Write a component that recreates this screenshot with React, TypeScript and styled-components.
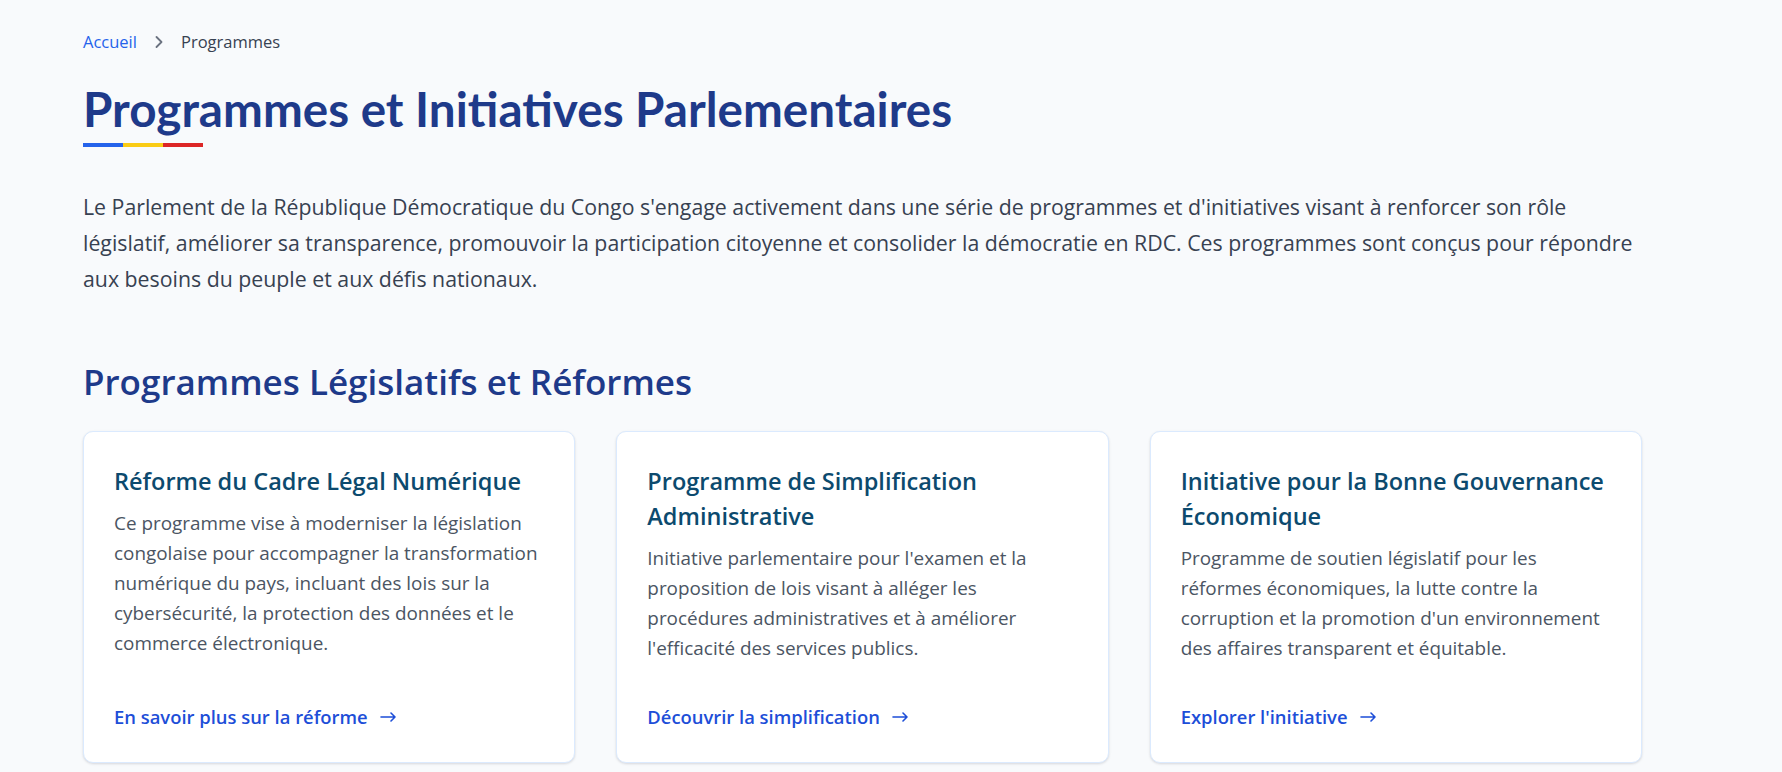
import React from "react";
import styled, { createGlobalStyle } from "styled-components";
import { ChevronRight } from "lucide-react";

const GlobalStyle = createGlobalStyle`
  html, body {
    margin: 0;
    padding: 0;
    background: #f8fafc;
  }
  body {
    font-family: "Open Sans", "Noto Sans", sans-serif;
    color: #374151;
    -webkit-font-smoothing: antialiased;
  }
  * { box-sizing: border-box; }
`;

const Page = styled.main`
  min-height: 772px;
  padding: 30px 0 40px 83px;
  width: 1642px;
`;

const Breadcrumb = styled.nav`
  display: flex;
  align-items: center;
  height: 24px;
  font-size: 16.5px;
  line-height: 24px;
`;

const CrumbLink = styled.a`
  color: #2563eb;
  text-decoration: none;
`;

const CrumbSep = styled.span`
  display: inline-flex;
  margin: 0 12px;
  color: #6b7280;
`;

const CrumbCurrent = styled.span`
  color: #374151;
`;

const Title = styled.h1`
  margin: 26px 0 0;
  font-family: Lato, "Open Sans", sans-serif;
  font-weight: 700;
  font-size: 47.6px;
  line-height: 57px;
  color: #1e3a8a;
`;

const FlagBar = styled.div`
  display: flex;
  width: 120px;
  height: 4px;
  margin-top: 6px;
`;

const FlagSegment = styled.span<{ $color: string }>`
  flex: 1;
  background: ${(p) => p.$color};
`;

const Intro = styled.p`
  margin: 41.5px 0 0;
  max-width: 1600px;
  font-size: 21.3px;
  line-height: 36px;
  color: #374151;
`;

const SectionTitle = styled.h2`
  margin: 64.5px 0 0;
  font-size: 35px;
  font-weight: 600;
  line-height: 42px;
  color: #1e3a8a;
`;

const CardGrid = styled.div`
  display: grid;
  grid-template-columns: repeat(3, 1fr);
  gap: 41px;
  margin-top: 28px;
  width: 1559px;
`;

const Card = styled.article`
  display: flex;
  flex-direction: column;
  background: #ffffff;
  border: 1px solid #dbeafe;
  border-radius: 10px;
  box-shadow: 0 1px 3px rgba(15, 23, 42, 0.1), 0 1px 2px rgba(15, 23, 42, 0.05);
  padding: 32px 24px 31px 30px;
`;

const CardTitle = styled.h3`
  margin: 0;
  font-size: 23.5px;
  font-weight: 600;
  line-height: 35px;
  color: #0c4a6e;
`;

const CardText = styled.p`
  margin: 9px 0 40px;
  font-size: 18.9px;
  line-height: 30px;
  color: #4b5563;
`;

const CardLink = styled.a`
  display: inline-flex;
  align-items: center;
  gap: 12px;
  margin-top: auto;
  font-size: 18.4px;
  font-weight: 600;
  line-height: 28px;
  color: #1d4ed8;
  text-decoration: none;
`;

const Arrow = () => (
  <svg width="16" height="12" viewBox="0 0 16 12" fill="none" stroke="currentColor" strokeWidth="1.6" strokeLinecap="round" strokeLinejoin="round">
    <path d="M1 6h14M11 2l4 4-4 4" />
  </svg>
);

const Lines = ({ lines }: { lines: string[] }) => (
  <>
    {lines.map((l, i) => (
      <React.Fragment key={i}>
        {i > 0 && <br />}
        {l}
      </React.Fragment>
    ))}
  </>
);

const intro = [
  "Le Parlement de la République Démocratique du Congo s'engage activement dans une série de programmes et d'initiatives visant à renforcer son rôle",
  "législatif, améliorer sa transparence, promouvoir la participation citoyenne et consolider la démocratie en RDC. Ces programmes sont conçus pour répondre",
  "aux besoins du peuple et aux défis nationaux.",
];

const programmes = [
  {
    title: ["Réforme du Cadre Légal Numérique"],
    text: [
      "Ce programme vise à moderniser la législation",
      "congolaise pour accompagner la transformation",
      "numérique du pays, incluant des lois sur la",
      "cybersécurité, la protection des données et le",
      "commerce électronique.",
    ],
    link: "En savoir plus sur la réforme",
  },
  {
    title: ["Programme de Simplification", "Administrative"],
    text: [
      "Initiative parlementaire pour l'examen et la",
      "proposition de lois visant à alléger les",
      "procédures administratives et à améliorer",
      "l'efficacité des services publics.",
    ],
    link: "Découvrir la simplification",
  },
  {
    title: ["Initiative pour la Bonne Gouvernance", "Économique"],
    text: [
      "Programme de soutien législatif pour les",
      "réformes économiques, la lutte contre la",
      "corruption et la promotion d'un environnement",
      "des affaires transparent et équitable.",
    ],
    link: "Explorer l'initiative",
  },
];

export default function App() {
  return (
    <>
      <GlobalStyle />
      <Page>
        <Breadcrumb>
          <CrumbLink href="#">Accueil</CrumbLink>
          <CrumbSep>
            <ChevronRight size={20} strokeWidth={2.2} />
          </CrumbSep>
          <CrumbCurrent>Programmes</CrumbCurrent>
        </Breadcrumb>

        <Title>Programmes et Initiatives Parlementaires</Title>
        <FlagBar>
          <FlagSegment $color="#2563eb" />
          <FlagSegment $color="#facc15" />
          <FlagSegment $color="#dc2626" />
        </FlagBar>

        <Intro>
          <Lines lines={intro} />
        </Intro>

        <SectionTitle>Programmes Législatifs et Réformes</SectionTitle>

        <CardGrid>
          {programmes.map((p) => (
            <Card key={p.link}>
              <CardTitle>
                <Lines lines={p.title} />
              </CardTitle>
              <CardText>
                <Lines lines={p.text} />
              </CardText>
              <CardLink href="#">
                {p.link}
                <Arrow />
              </CardLink>
            </Card>
          ))}
        </CardGrid>
      </Page>
    </>
  );
}
